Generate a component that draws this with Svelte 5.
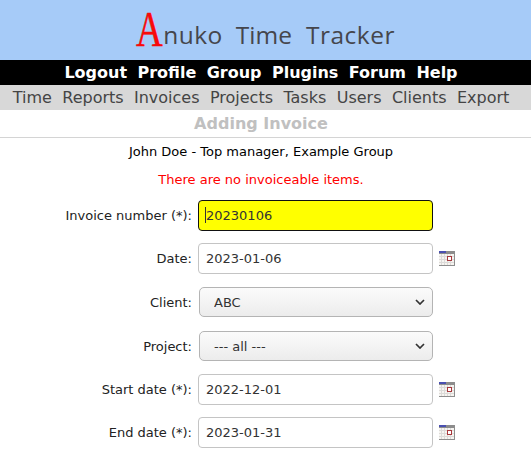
<script>
  const top = ['Logout', 'Profile', 'Group', 'Plugins', 'Forum', 'Help'];
  const sub = ['Time', 'Reports', 'Invoices', 'Projects', 'Tasks', 'Users', 'Clients', 'Export'];
</script>

{#snippet cal()}
  <svg class="cal" width="16" height="15" viewBox="0 0 16 15" aria-hidden="true">
    <rect x="0" y="0" width="16" height="15" fill="#f6f4f0" />
    <path d="M0 5.5H15M0 8.5H15M0 11.5H15M2.5 3V15M5.5 3V15M8.5 3V15M11.5 3V15" stroke="#dcdad8" stroke-width="1" fill="none" />
    <rect x="0" y="0" width="16" height="3" fill="#8c8c8c" />
    <rect x="0" y="0" width="7" height="2" fill="#4a50b0" />
    <rect x="8.5" y="5.5" width="4" height="4" fill="#fff" stroke="#a8383c" />
    <path d="M15.5 0V15M0 14.5H16" stroke="#8e8e8e" fill="none" />
  </svg>
{/snippet}

{#snippet chevron()}
  <svg class="chev" width="10" height="6" viewBox="0 0 10 6" aria-hidden="true">
    <path d="M1 1L5 5L9 1" fill="none" stroke="#333" stroke-width="1.7" />
  </svg>
{/snippet}

<div class="page">
  <header class="brand">
    <div class="logo"><span class="a">A</span><span class="name"><span class="w1">nuko</span><span class="w2">Time</span><span class="w3">Tracker</span></span></div>
  </header>
  <nav class="top">
    {#each top as t}<a href="#top">{t}</a>{/each}
  </nav>
  <nav class="sub">
    {#each sub as t}<a href="#sub">{t}</a>{/each}
  </nav>
  <h1>Adding Invoice</h1>
  <p class="user">John Doe - Top manager, Example Group</p>
  <p class="err">There are no invoiceable items.</p>

  <form class="form">
    <label for="n">Invoice number (*):</label>
    <div class="field"><input id="n" class="req" value="20230106" /><span class="caret"></span></div>

    <label for="d">Date:</label>
    <div class="field"><input id="d" value="2023-01-06" />{@render cal()}</div>

    <label for="c">Client:</label>
    <div class="field pick"><select id="c"><option>ABC</option></select>{@render chevron()}</div>

    <label for="p">Project:</label>
    <div class="field pick"><select id="p"><option>--- all ---</option></select>{@render chevron()}</div>

    <label for="s">Start date (*):</label>
    <div class="field"><input id="s" value="2022-12-01" />{@render cal()}</div>

    <label for="e">End date (*):</label>
    <div class="field"><input id="e" value="2023-01-31" />{@render cal()}</div>
  </form>
</div>

<style>
  :global(body) { margin: 0; background: #fff; overflow: hidden; }
  .page { font-family: "DejaVu Sans", sans-serif; font-size: 13px; color: #000; width: 531px; height: 456px; overflow: hidden; }
  .brand { height: 60px; background: #a6cbf8; display: flex; justify-content: center; padding-right: 9px; }
  .logo { display: flex; align-items: baseline; height: 60px; padding-top: 1px; margin-left: 6px; box-sizing: border-box; }
  .a { font-family: "Liberation Serif", serif; font-size: 50px; line-height: 52px; color: #f80a0a; -webkit-text-stroke: 0.5px #f80a0a; display: inline-block; transform: translate(3px, 2px) scaleX(0.74); transform-origin: left bottom; margin-right: -6px; }
  .name { font-family: "Open Sans", sans-serif; font-size: 24.5px; color: #45464c; }
  .w1 { letter-spacing: 0.5px; margin-right: 13px; }
  .w2 { letter-spacing: 0; margin-right: 14px; }
  .w3 { letter-spacing: 0.5px; }
  nav { display: flex; justify-content: center; align-items: center; height: 25px; font-size: 16px; padding-right: 9px; }
  nav a { text-decoration: none; }
  .top { background: #000; gap: 10.4px; }
  .top a { color: #fff; font-weight: 700; }
  .sub { background: #d8d8d8; gap: 10.4px; }
  .sub a { color: #444; }
  h1 { margin: 0; height: 28px; line-height: 27px; box-sizing: border-box; text-align: center; font-size: 16px; font-weight: 700; color: #c0c0c0; border-bottom: 1px solid #d4d4d4; padding-right: 9px; }
  .user { margin: 6px 0 0; height: 16px; line-height: 16px; text-align: center; padding-right: 9px; }
  .err { margin: 12px 0 0; height: 16px; line-height: 16px; text-align: center; color: #f00; padding-right: 9px; }
  .form { display: grid; grid-template-columns: 192px 1fr; column-gap: 6px; margin-top: 12px; row-gap: 12px; align-items: center; }
  label { text-align: right; color: #222; }
  .field { display: flex; align-items: center; gap: 6px; position: relative; height: 31px; }
  .field.pick { height: 32px; }
  input { width: 235px; height: 31px; box-sizing: border-box; border: 1px solid #c4c4c4; border-radius: 4px; padding: 0 7px; background: #fff; font: 13px "DejaVu Sans", sans-serif; color: #333; outline: none; }
  input.req { background: #ff0; border-color: #111; }
  .caret { position: absolute; left: 7px; top: 7px; width: 1px; height: 16px; background: #333; }
  select { appearance: none; width: 234px; margin-left: 1px; height: 30px; box-sizing: border-box; border: 1px solid #b4b4b4; border-radius: 5px; padding: 0 14px; font: 13px "DejaVu Sans", sans-serif; color: #333; background: linear-gradient(#fbfbfb, #ececec); }
  .chev { position: absolute; left: 217px; top: 13px; pointer-events: none; }
  .cal { flex: none; }
</style>
